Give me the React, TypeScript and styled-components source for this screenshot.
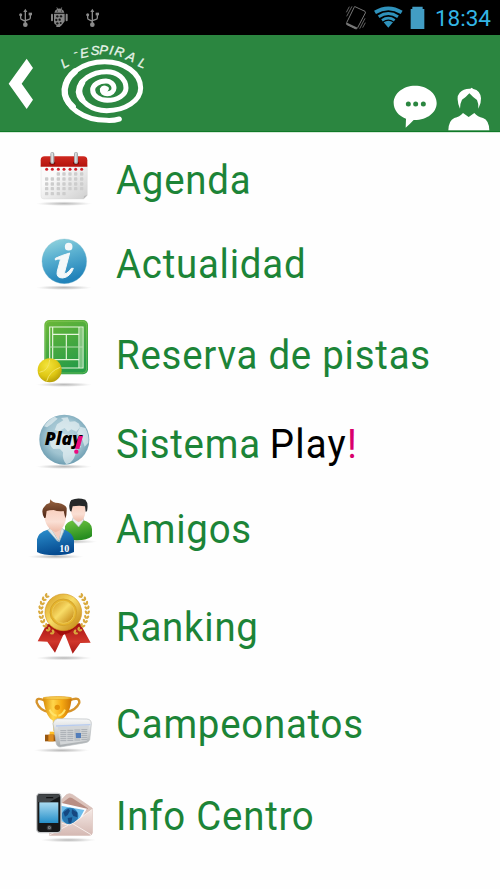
import React from "react";
import styled, { createGlobalStyle } from "styled-components";

const GlobalStyle = createGlobalStyle`
  * {
    box-sizing: border-box;
  }
  body {
    margin: 0;
    background: #fefefe;
    font-family: Roboto, "Liberation Sans", sans-serif;
  }
  svg {
    display: block;
    flex-shrink: 0;
  }
`;
const Screen = styled.div`
  width: 100%;
  max-width: 500px;
  height: 889px;
  overflow: hidden;
  background: #fefefe;
`;
const StatusBar = styled.div`
  display: flex;
  justify-content: space-between;
  height: 35px;
  padding: 0 9px 0 18px;
  background: #000;
`;
const StatusGroup = styled.div<{ $gap: number }>`
  display: flex;
  align-items: center;
  gap: ${(props) => props.$gap}px;
`;
const Clock = styled.span`
  margin-left: 3px;
  font-size: 22.5px;
  line-height: 36px;
  color: #33b5e5;
`;
const Header = styled.header`
  display: flex;
  justify-content: space-between;
  height: 98px;
  padding: 0 10px 0 8px;
  border-bottom: 1px solid #d5ead8;
  background: #2b8640;
  box-shadow: inset 0 -1px 0 #0f7a28;
`;
const HeaderLeft = styled.div`
  display: flex;
  align-items: flex-start;
  gap: 26px;
`;
const HeaderRight = styled.div`
  display: flex;
  align-items: flex-end;
  gap: 11px;
`;
const IconButton = styled.button<{ $top?: number; $bottom?: number }>`
  margin: ${(props) => props.$top || 0}px 0 ${(props) => props.$bottom || 0}px;
  padding: 0;
  border: 0;
  background: transparent;
`;
const Menu = styled.ul`
  margin: 0;
  padding: 7px 0 0 20px;
  list-style: none;
`;
const MenuItem = styled.li<{ $height: number }>`
  display: flex;
  align-items: flex-start;
  gap: 5.5px;
  height: ${(props) => props.$height}px;
`;
const Label = styled.span<{ $top: number }>`
  margin-top: ${(props) => props.$top}px;
  font-size: 40px;
  line-height: 48px;
  letter-spacing: 0.8px;
  white-space: nowrap;
  color: #1c8437;
  transform: scaleX(0.96);
  transform-origin: left;
`;
const Play = styled.span`
  margin-left: -2px;
  letter-spacing: 1.3px;
  color: #000;
`;
const Bang = styled.span`
  color: #d9006c;
`;

const Usb = () => (
  <svg width="16" height="21" viewBox="54 21 48 63" fill="none" stroke="#8b8b8b" strokeWidth="4">
    <path d="M76 72V32M62 46V54Q62 58 66 59L76 64M91 43V53Q91 57 87 58L76 62" />
    <path d="M70 36L76 26L82 36Z" fill="#8b8b8b" stroke="none" />
    <circle cx="76" cy="74" r="7" fill="#8b8b8b" stroke="none" />
    <circle cx="62" cy="44" r="4.5" fill="#8b8b8b" stroke="none" />
    <path d="M86 38H96V46H86Z" fill="#8b8b8b" stroke="none" />
  </svg>
);

const Android = () => (
  <svg width="18" height="21" viewBox="147 21 54 63" fill="#858585">
    <path d="M160 38Q162 29 169 27L166 23L168 22L171 26Q175 25 179 26L182 22L184 23L181 27Q189 30 190 38Z" />
    <rect x="150" y="41" width="6" height="23" rx="3" />
    <rect x="194" y="41" width="6" height="23" rx="3" />
    <path d="M159 41H191V64L182 76L176 81H166V75Q159 73 159 66Z" />
    <g fill="#151515">
      <circle cx="169" cy="49" r="3.5" />
      <circle cx="180" cy="49" r="3.5" />
      <circle cx="166" cy="60" r="3.5" />
      <circle cx="176" cy="59" r="3.5" />
      <circle cx="169" cy="70" r="3.5" />
      <circle cx="179" cy="69" r="3" />
    </g>
    <circle cx="169" cy="33" r="1.5" fill="#000" />
    <circle cx="181" cy="33" r="1.5" fill="#000" />
  </svg>
);

const Vibrate = () => (
  <svg width="22" height="25" viewBox="285 15 66 75" fill="none" stroke="#777" strokeWidth="3">
    <path d="M315 20L345 34Q347 36 346 39L323 83Q321 88 316 86L291 74Q288 72 290 68L312 23Q313 19 315 20Z" />
    <path d="M290 71L320 85" strokeWidth="6" />
    <path d="M306 19L290 49M298 20L289 37M345 55L329 86M346 68L338 83" strokeWidth="2.5" />
  </svg>
);

const Wifi = () => (
  <svg width="29" height="23" viewBox="374 17 87 69" fill="none" stroke="#2f92bc">
    <path d="M377 36Q417 12 457 36" strokeWidth="11" />
    <path d="M388 49Q417 30 446 49" strokeWidth="9" />
    <path d="M398 60Q417 47 436 60" strokeWidth="8" />
    <path d="M403 66Q417 56 431 66L417 82Z" fill="#2f92bc" stroke="none" />
  </svg>
);

const Battery = () => (
  <svg width="15" height="24" viewBox="480 15 45 72" fill="#429dc4">
    <path d="M482 24H487V17H518V24H523V84H482Z" />
  </svg>
);

const Back = () => (
  <svg width="26" height="52" viewBox="24 174 78 156" fill="#fff">
    <path d="M80 176L99 204L65 251L99 299L80 327L26 251Z" />
  </svg>
);

const Logo = () => (
  <svg width="100" height="91" viewBox="180 105 300 273">
    <g fill="none" stroke="#fff" strokeLinecap="round">
      <path
        d="M358 357Q342 362 320 361A126 89 0 0 1 194 272A120 87 0 0 1 314 185A108 79 0 0 1 422 264A102 68 0 0 1 320 332A82 60 0 0 1 238 272A82 57 0 0 1 320 215A58 49 0 0 1 378 264A56 37 0 0 1 322 301A44 31 0 0 1 278 270A40 27 0 0 1 318 243A24 21 0 0 1 342 264A20 17 0 0 1 322 281Q306 281 307 268Q310 262 319 266"
        strokeWidth="15"
      />
      <path d="M218 320Q192 298 194 268Q198 236 224 215M246 298Q228 275 246 248" strokeWidth="19" />
    </g>
    <text
      x="191 211 243 272 297 326 341 376 412"
      y="206 180 175 166 163 163 164 178 197"
      rotate="-30 20 -12 0 4 10 16 22 24"
      fill="#e7f3e9"
      fontFamily="Liberation Sans"
      fontStyle="italic"
      fontSize="39"
      stroke="#e7f3e9"
    >
      L´ESPIRAL
    </text>
  </svg>
);

const Chat = () => (
  <svg width="44" height="44" viewBox="428 254 132 132">
    <path d="M494 256C530 256 559 279 559 308S530 360 490 359Q477 373 466 382L467 355C445 347 430 329 430 308C430 279 459 256 494 256Z" fill="#fff" />
    <g fill="#2b8640">
      <circle cx="474" cy="311" r="7.5" />
      <circle cx="496" cy="311" r="7.5" />
      <circle cx="519" cy="311" r="7.5" />
    </g>
  </svg>
);

const User = () => (
  <svg width="42" height="44" viewBox="593 260 126 132" fill="#fff">
    <path d="M629 325Q615 291 628 277Q640 264 660 265L664 262L669 266Q690 270 692 294Q693 309 684 325Q685 309 680 299Q668 291 657 279Q646 292 635 298Q629 309 629 325Z" />
    <path d="M594 390Q595 360 612 353Q628 350 638 338L655 350L672 338Q682 350 698 353Q716 359 717 390Z" />
  </svg>
);

const Shadow = ({ y, x = 132 }: { y: number; x?: number }) => (
  <>
    <radialGradient id={`shadow${y}`}>
      <stop offset="0" stopColor="#888" stopOpacity="0.6" />
      <stop offset="0.5" stopColor="#999" stopOpacity="0.35" />
      <stop offset="1" stopColor="#bbb" stopOpacity="0" />
    </radialGradient>
    <ellipse cx={x} cy={y} rx="84" ry="7" fill={`url(#shadow${y})`} />
  </>
);

const CalendarIcon = () => (
  <svg width="90" height="80" viewBox="0 0 270 240">
    <linearGradient id="page" x2="1" y2="1">
      <stop offset="0.3" stopColor="#fafafa" />
      <stop offset="1" stopColor="#cfcfcf" />
    </linearGradient>
    <linearGradient id="calRed" x2="0" y2="1">
      <stop stopColor="#cf2920" />
      <stop offset="1" stopColor="#b3120c" />
    </linearGradient>
    <Shadow y={191} />
    <path d="M63 75H202V166L190 177H72Q63 177 63 168Z" fill="url(#page)" stroke="#d5d5d5" />
    <path d="M62 80V61Q62 49 74 49H190Q202 49 202 61V80Z" fill="url(#calRed)" />
    <path d="M202 165L191 177L192 168Z" fill="#bbb" />
    {[97, 168].map((x) => (
      <g key={x}>
        <ellipse cx={x} cy="69" rx="9" ry="5" fill="#780b08" />
        <rect x={x - 6} y="36" width="12" height="36" rx="6" fill="#a7aaac" />
        <rect x={x - 3} y="38" width="5" height="30" rx="2" fill="#dddfe0" />
      </g>
    ))}
    {[80, 97, 115, 132, 150, 167, 185].map((x, i) => (
      <g key={x}>
        <circle cx={x} cy="88" r="4.5" fill="#d5202a" />
        {[102, 117, 132, 146, 161].map((y, j) =>
          (j === 0 && i < 2) || (j === 4 && i > 3) ? null : (
            <rect key={y} x={x - 5} y={y - 5} width="10" height="10" rx="2" fill="#cdcdcd" />
          )
        )}
      </g>
    ))}
  </svg>
);

const InfoIcon = () => (
  <svg width="90" height="80" viewBox="0 0 270 240">
    <linearGradient id="info" x2="0.3" y2="1">
      <stop stopColor="#9bd9df" />
      <stop offset="0.45" stopColor="#5bb1d1" />
      <stop offset="1" stopColor="#2183ba" />
    </linearGradient>
    <Shadow y={188} />
    <circle cx="133" cy="109" r="67" fill="url(#info)" stroke="#82bccd" />
    <circle cx="146" cy="65" r="11.5" fill="#f4f8f9" />
    <path
      d="M106 100Q122 92 149 84L134 141Q132 149 139 145Q148 140 154 130L160 130Q151 156 128 159Q107 159 112 138L121 105Q121 99 106 105Z"
      fill="#f4f8f9"
      stroke="#f4f8f9"
      strokeWidth="3"
      strokeLinejoin="round"
    />
  </svg>
);

const CourtIcon = () => (
  <svg width="90" height="90" viewBox="0 0 270 270">
    <linearGradient id="court" x2="0.4" y2="1">
      <stop stopColor="#6cb837" />
      <stop offset="1" stopColor="#279c47" />
    </linearGradient>
    <radialGradient id="ball" cx="0.4" cy="0.3" r="0.75">
      <stop stopColor="#f3e43c" />
      <stop offset="0.6" stopColor="#dfc814" />
      <stop offset="1" stopColor="#b29a08" />
    </radialGradient>
    <Shadow y={239} />
    <rect x="73" y="45" width="131" height="163" rx="15" fill="url(#court)" />
    <rect x="77" y="49" width="123" height="155" rx="12" fill="none" stroke="#8acb5e" strokeOpacity="0.6" strokeWidth="3" />
    <path d="M89 66H189V189H89ZM98 66V189M177 66V189M98 88H177M98 164H177M139 88V164" fill="none" stroke="#e6f5dc" strokeWidth="3.5" />
    <path d="M89 126H189M183 66V189" stroke="#b7deb0" strokeWidth="3.5" />
    <circle cx="89" cy="196" r="36" fill="url(#ball)" />
    <path d="M58 202Q87 197 89 164M80 229Q88 198 121 187" fill="none" stroke="#f3e466" strokeWidth="3" />
  </svg>
);

const GlobeIcon = () => (
  <svg width="90" height="80" viewBox="0 0 270 240">
    <radialGradient id="globe" cx="0.5" cy="0.45" r="0.55">
      <stop stopColor="#c0dae4" />
      <stop offset="0.65" stopColor="#9fc3d0" />
      <stop offset="1" stopColor="#6e9eb2" />
    </radialGradient>
    <Shadow y={200} />
    <circle cx="133" cy="119" r="75" fill="url(#globe)" />
    <g fill="#edf4f6" fillOpacity="0.65">
      <path d="M91 118Q99 99 123 99L143 105L160 104L176 134L184 140L169 151Q165 177 151 188L139 193Q126 179 129 157L119 146L100 147Q87 138 91 118Z" />
      <path d="M104 90L111 73L130 61L123 54L143 52L149 65L165 64L177 71L180 82L169 95L154 88L144 95L134 84L116 94Z" />
      <path d="M72 79Q83 60 104 50L113 56L95 72L81 82Z" />
      <path d="M181 80L196 84Q208 107 205 128L194 140L186 116L171 100Z" />
    </g>
    <text
      x="74"
      y="136"
      fontFamily="Open Sans"
      fontSize="52"
      fontWeight="800"
      fontStyle="italic"
      textLength="112"
      lengthAdjust="spacingAndGlyphs"
    >
      Play
    </text>
    <path d="M176 108H189L178 147L165 146Z" fill="#ec0b80" />
    <circle cx="169" cy="155" r="6.5" fill="#ec0b80" />
  </svg>
);

const FriendsIcon = () => (
  <svg width="90" height="80" viewBox="0 0 270 240">
    <linearGradient id="skin" x2="0" y2="1">
      <stop stopColor="#f9cdbb" />
      <stop offset="0.6" stopColor="#fadfd4" />
      <stop offset="1" stopColor="#eeb9a5" />
    </linearGradient>
    <linearGradient id="blue" x2="0.3" y2="1">
      <stop stopColor="#2c91cf" />
      <stop offset="1" stopColor="#064b90" />
    </linearGradient>
    <linearGradient id="green" x2="0.3" y2="1">
      <stop stopColor="#72c641" />
      <stop offset="1" stopColor="#268d20" />
    </linearGradient>
    <linearGradient id="hair" x2="0" y2="1">
      <stop stopColor="#9a6542" />
      <stop offset="1" stopColor="#4b2413" />
    </linearGradient>
    <Shadow y={170} x={148} />
    <Shadow y={215} x={107} />
    <path d="M135 160V124Q140 111 160 105L176 120L190 106Q214 111 216 132V154Q202 166 170 166Q147 165 135 160Z" fill="url(#green)" />
    <path d="M157 106L176 126L191 106L187 94H161Z" fill="#e9eeee" stroke="#a9b4b5" strokeWidth="2" />
    <path d="M151 69Q153 52 175 52Q199 54 197 77Q194 109 175 111Q155 105 151 69Z" fill="url(#skin)" />
    <path d="M150 77Q144 55 154 45Q173 36 196 44Q206 54 201 79L197 80L195 64Q178 60 158 64L154 80Z" fill="#252829" />
    <path d="M51 201V163Q55 142 83 134L116 167L131 133Q158 143 162 166V201Q141 211 105 211Q69 211 51 201Z" fill="url(#blue)" />
    <path d="M84 136L92 127L116 168L124 127L132 137L118 170L112 168Z" fill="#dfe8ea" stroke="#9aaeb7" strokeWidth="2" />
    <path d="M91 128L116 164L125 128V110H91Z" fill="#f4cdbf" />
    <path d="M72 88Q74 61 105 65Q140 61 139 94Q134 136 107 141Q76 133 72 88Z" fill="url(#skin)" />
    <path d="M73 99Q61 77 73 65Q78 56 89 54L91 43Q97 54 115 54Q136 58 140 69Q141 89 136 100L131 78Q115 81 101 75Q88 75 80 78L77 98Z" fill="url(#hair)" />
    <text x="118" y="200" fill="#fff" fontFamily="Liberation Serif" fontWeight="bold" fontSize="30">
      10
    </text>
  </svg>
);

const leaves = [
  [82, 46, -50], [73, 56, -45], [67, 68, -25], [63, 81, -15], [62, 95, 0], [64, 109, 10],
  [68, 122, 22], [75, 135, 35], [84, 147, 45], [96, 156, 60],
];

const MedalIcon = () => (
  <svg width="90" height="90" viewBox="0 0 270 270">
    <linearGradient id="gold" x2="1" y2="1">
      <stop stopColor="#d4981d" />
      <stop offset="0.45" stopColor="#f8dc67" />
      <stop offset="1" stopColor="#bd7b08" />
    </linearGradient>
    <linearGradient id="ribbon" x2="0" y2="1">
      <stop stopColor="#a51212" />
      <stop offset="0.6" stopColor="#d0362a" />
      <stop offset="1" stopColor="#a91713" />
    </linearGradient>
    <Shadow y={234} />
    <path d="M80 133L53 184L82 185L105 218L133 158L158 221L181 189L212 188L180 130Z" fill="url(#ribbon)" />
    <path d="M85 132L122 167L148 158L177 133Z" fill="#a30d0b" />
    {[0, 1].map((side) => (
      <g key={side} transform={side ? "matrix(-1 0 0 1 264 0)" : undefined} fill="#d9aa3e">
        {leaves.map(([x, y, angle]) => (
          <g key={y} transform={`translate(${x} ${y}) rotate(${-angle})`}>
            <ellipse cx="-4" rx="3.5" ry="6" transform="rotate(-30)" />
            <ellipse cx="4" rx="3.5" ry="6" transform="rotate(30)" />
          </g>
        ))}
      </g>
    ))}
    <circle cx="130" cy="97" r="55" fill="url(#gold)" stroke="#d49a22" strokeWidth="2" />
    <circle cx="130" cy="97" r="40" fill="#e5b42d" stroke="#cc9a28" strokeWidth="2" />
    <circle cx="130" cy="97" r="33" fill="url(#gold)" stroke="#ecc954" strokeWidth="3" />
  </svg>
);

const TrophyIcon = () => (
  <svg width="90" height="80" viewBox="0 0 270 240">
    <linearGradient id="cup">
      <stop stopColor="#d98a05" />
      <stop offset="0.35" stopColor="#ffd64b" />
      <stop offset="0.65" stopColor="#f6aa12" />
      <stop offset="1" stopColor="#cc7404" />
    </linearGradient>
    <linearGradient id="paper" x2="0" y2="1">
      <stop stopColor="#f7f8f8" />
      <stop offset="1" stopColor="#a4a9ac" />
    </linearGradient>
    <Shadow y={211} x={125} />
    <path d="M75 62Q48 49 50 67Q59 92 88 96M149 61Q179 49 178 68Q168 91 139 96" fill="none" stroke="#d5932c" strokeWidth="7" />
    <path d="M69 53Q112 46 155 53Q151 108 119 121L117 153H100L98 121Q76 109 69 53Z" fill="url(#cup)" />
    <ellipse cx="112" cy="54" rx="42" ry="4" fill="#f9ce50" stroke="#dc9b20" strokeWidth="2" />
    <circle cx="112" cy="82" r="8" fill="#e19009" />
    <path d="M89 89Q95 105 110 107M135 89Q128 105 115 107" fill="none" stroke="#ffe369" strokeWidth="6" />
    <path d="M89 155H130V166H89Z" fill="#ffbd24" />
    <path d="M75 164H124V184H75Z" fill="#985710" />
    <path d="M85 164H101V184H85Z" fill="#dd8c20" />
    <path d="M99 131Q101 119 112 116L200 117Q215 118 214 132L209 180Q205 188 191 189L120 201Q109 200 108 186Z" fill="url(#paper)" stroke="#b6bbbe" strokeWidth="2" />
    <path d="M113 140L207 136L201 182L121 194Z" fill="#d3d6d8" />
    <path d="M108 138L211 134" stroke="#b8ccef" strokeWidth="4" />
    {[0, 1, 2, 3].map((col) => (
      <path
        key={col}
        d="M121 152H139M121 158H139M121 164H139M121 170H139M121 176H139M121 182H139"
        transform={`translate(${col * 21} ${-col})`}
        stroke="#a8adb2"
        strokeWidth="3"
      />
    ))}
    <path d="M167 159H183V174H168Z" fill="#527dba" />
  </svg>
);

const ContactIcon = () => (
  <svg width="90" height="70" viewBox="0 0 270 210">
    <linearGradient id="screen" x2="0" y2="1">
      <stop stopColor="#aadbf1" />
      <stop offset="1" stopColor="#258fc9" />
    </linearGradient>
    <linearGradient id="envelope" x2="0" y2="1">
      <stop stopColor="#f4e8e4" />
      <stop offset="1" stopColor="#d5b9b3" />
    </linearGradient>
    <Shadow y={180} x={145} />
    <path d="M108 77L139 44Q148 38 158 44L217 85V158Q216 166 207 166H88Z" fill="#dbc2ba" stroke="#d4bbb5" strokeWidth="2" />
    <path d="M121 73L147 53Q151 51 156 54L204 85L158 135Z" fill="#b88e84" />
    <path d="M122 68L201 86L184 115L147 134L118 120Z" fill="#f9fcff" />
    <path d="M122 77L193 90L178 117L147 134L122 122Z" fill="#6cbdec" />
    <circle cx="150" cy="108" r="25" fill="#2878b2" />
    <path d="M130 97L145 86L150 92L143 105L135 110ZM156 88L171 97L172 112L160 108L155 99ZM143 114L157 112L154 128L146 130Z" fill="#164780" />
    <path d="M88 166V117L139 134Q149 138 161 129L217 88V158Q216 166 207 166Z" fill="url(#envelope)" />
    <path d="M88 117L139 134Q149 138 161 129L217 88M158 131L213 164M144 136L88 165" fill="none" stroke="#f8eeeb" strokeWidth="3" />
    <rect x="50" y="40" width="73" height="118" rx="11" fill="#171819" stroke="#c9cbcd" strokeWidth="4" />
    <path d="M58 43H116Q121 43 120 49L89 66H53V49Q53 43 58 43Z" fill="#414548" />
    <rect x="58" y="67" width="57" height="62" fill="url(#screen)" />
    <rect x="78" y="51" width="22" height="4" rx="2" fill="#111" />
    <circle cx="88" cy="143" r="8" fill="#34373a" />
    <rect x="85" y="140" width="6" height="6" rx="1" fill="none" stroke="#c8ccce" strokeWidth="1.5" />
  </svg>
);

const items = [
  { text: "Agenda", icon: <CalendarIcon />, height: 85, top: 17 },
  { text: "Actualidad", icon: <InfoIcon />, height: 80, top: 16 },
  { text: "Reserva de pistas", icon: <CourtIcon />, height: 95, top: 27 },
  { text: "Sistema", icon: <GlobeIcon />, height: 85, top: 21, play: true },
  { text: "Amigos", icon: <FriendsIcon />, height: 95, top: 21 },
  { text: "Ranking", icon: <MedalIcon />, height: 100, top: 24 },
  { text: "Campeonatos", icon: <TrophyIcon />, height: 100, top: 21 },
  { text: "Info Centro", icon: <ContactIcon />, height: 109, top: 13 },
];

function App() {
  return (
    <Screen>
      <GlobalStyle />
      <StatusBar>
        <StatusGroup $gap={16.3}>
          <Usb />
          <Android />
          <Usb />
        </StatusGroup>
        <StatusGroup $gap={7}>
          <Vibrate />
          <Wifi />
          <Battery />
          <Clock>18:34</Clock>
        </StatusGroup>
      </StatusBar>
      <Header>
        <HeaderLeft>
          <IconButton $top={23}>
            <Back />
          </IconButton>
          <Logo />
        </HeaderLeft>
        <HeaderRight>
          <IconButton $bottom={3}>
            <Chat />
          </IconButton>
          <IconButton $bottom={1}>
            <User />
          </IconButton>
        </HeaderRight>
      </Header>
      <Menu>
        {items.map((item) => (
          <MenuItem key={item.text} $height={item.height}>
            {item.icon}
            <Label $top={item.top}>
              {item.text}
              {item.play && (
                <Play>
                  {" "}
                  Play<Bang>!</Bang>
                </Play>
              )}
            </Label>
          </MenuItem>
        ))}
      </Menu>
    </Screen>
  );
}

export default App;
